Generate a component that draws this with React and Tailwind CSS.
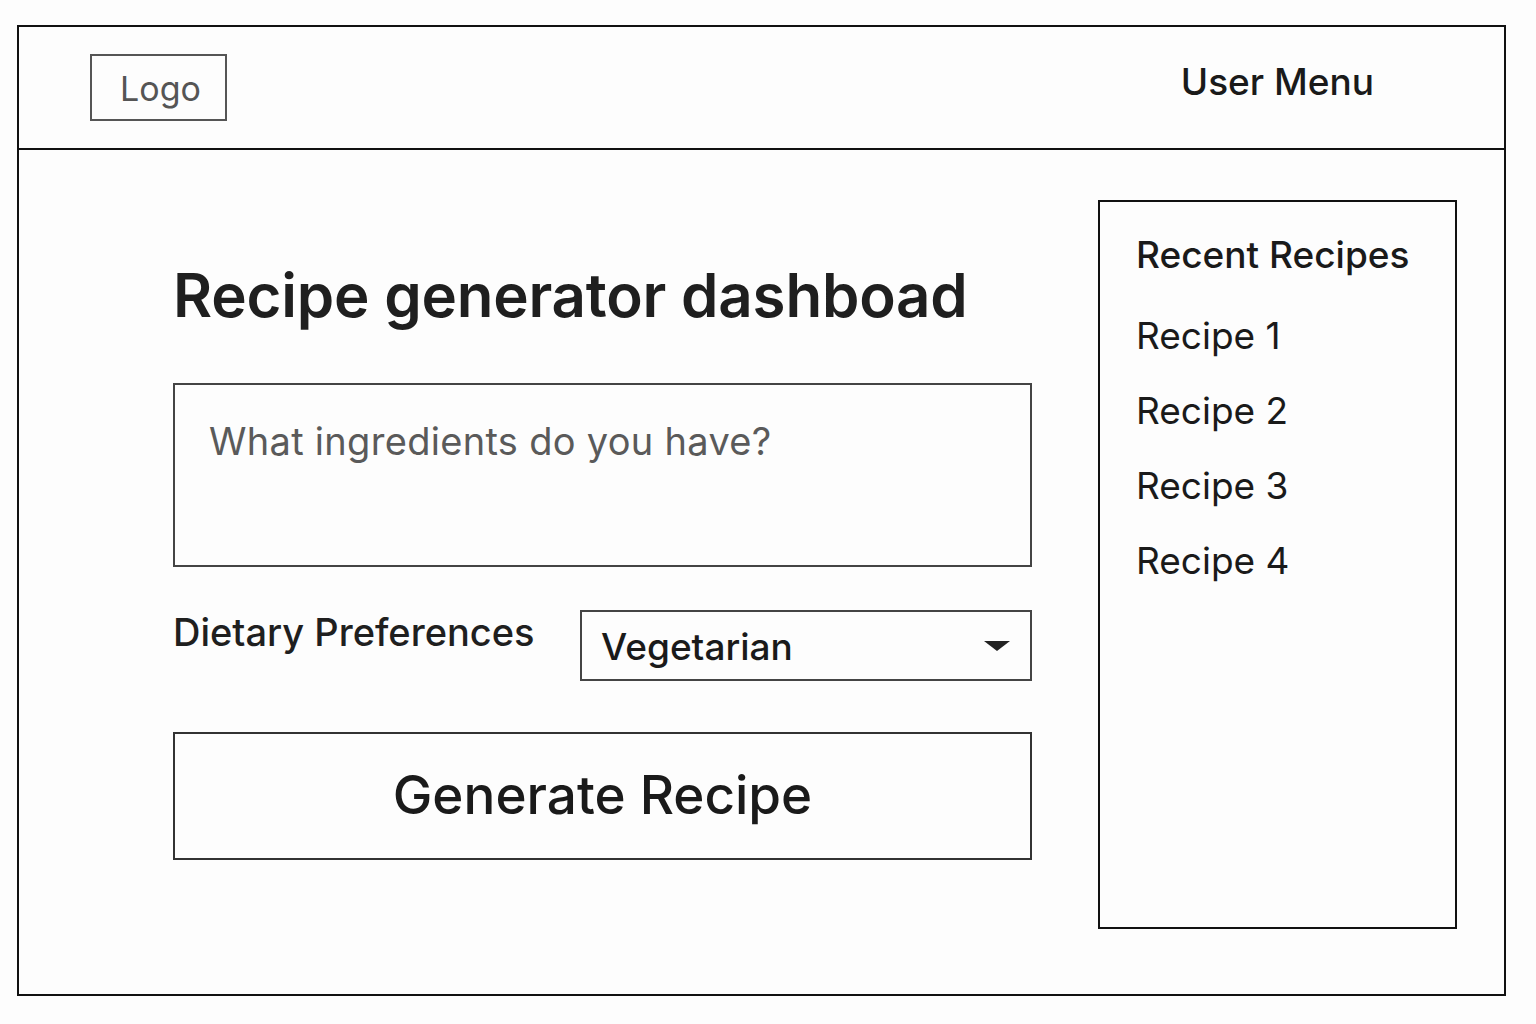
export default function App() {
  const font = { fontFamily: 'Inter, "Noto Sans", sans-serif' };
  return (
    <div className="w-[1536px] h-[1024px] bg-[#fdfdfd] pt-[25px] pl-[17px]" style={font}>
      <div className="w-[1489px] h-[971px] border-2 border-[#111] flex flex-col">
        <header className="h-[123px] border-b-2 border-[#111] flex items-center justify-between pl-[71px] pr-[130px] shrink-0">
          <div className="w-[137px] h-[67px] border-2 border-[#555] flex items-center justify-center text-[34px] leading-none text-[#555] pt-[3px] pl-[4px]">
            Logo
          </div>
          <div className="text-[37px] leading-none text-[#1a1a1a] font-medium -mt-[12px]">User Menu</div>
        </header>
        <main className="flex flex-1 pl-[154px] pr-[46px]">
          <section className="w-[859px] flex flex-col pt-[115px]">
            <h1 className="text-[60px] leading-none font-semibold text-[#1f1f1f] tracking-[-0.2px]">
              Recipe generator dashboad
            </h1>
            <div className="mt-[58px] h-[184px] border-2 border-[#444] pl-[34px] pt-[37px]">
              <span className="text-[38px] leading-none text-[#5a5a5a] tracking-[0.3px]">What ingredients do you have?</span>
            </div>
            <div className="mt-[43px] flex items-start">
              <div className="w-[407px] pt-[3px] text-[38px] leading-none font-medium text-[#1f1f1f]">Dietary Preferences</div>
              <div className="flex-1 h-[71px] border-2 border-[#444] flex items-center justify-between pl-[19px] pr-[20px]">
                <span className="text-[37px] leading-none font-medium text-[#1a1a1a] pt-[1px]">Vegetarian</span>
                <svg width="26" height="10" viewBox="0 0 26 10">
                  <polygon points="0,0 26,0 13,10" fill="#222" />
                </svg>
              </div>
            </div>
            <button className="mt-[51px] h-[128px] border-2 border-[#333] flex items-center justify-center text-[53px] leading-none font-medium text-[#1a1a1a] pb-[2px]">
              Generate Recipe
            </button>
          </section>
          <aside className="ml-[66px] mt-[50px] w-[359px] h-[729px] border-2 border-[#111] pl-[36px] pt-[34px]">
            <div className="text-[37px] leading-none text-[#1a1a1a] font-medium">Recent Recipes</div>
            <ul className="mt-[44px] flex flex-col gap-[38px]">
              <li className="text-[37px] leading-none text-[#1a1a1a]">Recipe 1</li>
              <li className="text-[37px] leading-none text-[#1a1a1a]">Recipe 2</li>
              <li className="text-[37px] leading-none text-[#1a1a1a]">Recipe 3</li>
              <li className="text-[37px] leading-none text-[#1a1a1a]">Recipe 4</li>
            </ul>
          </aside>
        </main>
      </div>
    </div>
  );
}
